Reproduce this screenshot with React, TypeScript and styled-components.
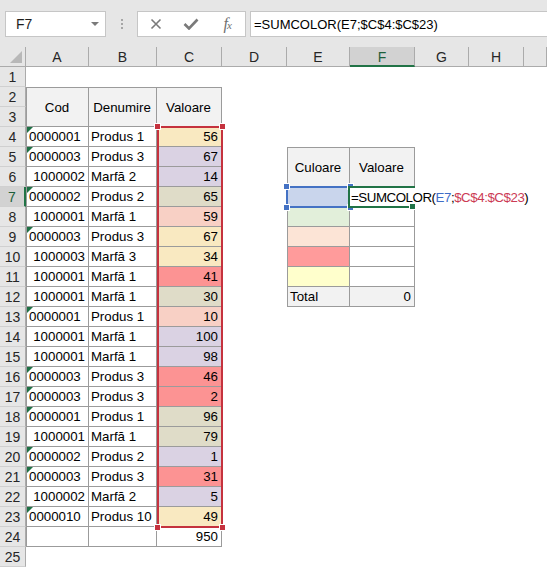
import React from "react";
import styled, { createGlobalStyle, css } from "styled-components";

const GlobalStyle = createGlobalStyle`
  html, body {
    margin: 0;
    padding: 0;
    background: #ffffff;
  }
  body {
    font-family: "Liberation Sans", Arial, sans-serif;
    font-size: 13px;
    color: #000;
    overflow: hidden;
  }
`;

const Window = styled.div`
  width: 547px;
  height: 567px;
  overflow: hidden;
  display: flex;
  flex-direction: column;
  background: #fff;
`;

/* ---------- formula bar ---------- */

const Toolbar = styled.div`
  height: 47px;
  flex: none;
  box-sizing: border-box;
  background: #e6e6e6;
  display: flex;
  align-items: flex-start;
  padding: 11px 0 0 5px;
`;

const NameBox = styled.div`
  width: 101px;
  height: 26px;
  box-sizing: border-box;
  background: #fff;
  border: 1px solid #c6c6c6;
  display: flex;
  align-items: center;
  justify-content: space-between;
  padding: 0 6px 0 10px;
  font-size: 14px;
  color: #1f1f1f;
`;

const DropArrow = styled.span`
  width: 0;
  height: 0;
  border-left: 4px solid transparent;
  border-right: 4px solid transparent;
  border-top: 4px solid #7a7a7a;
`;

const Grip = styled.div`
  width: 31px;
  height: 26px;
  display: flex;
  flex-direction: column;
  align-items: center;
  justify-content: center;
  gap: 2px;

  span {
    width: 2px;
    height: 2px;
    background: #a6a6a6;
  }
`;

const ButtonBox = styled.div`
  width: 109px;
  height: 26px;
  box-sizing: border-box;
  background: #fff;
  border: 1px solid #c6c6c6;
  display: grid;
  grid-template-columns: repeat(3, 1fr);
  align-items: center;
  justify-items: center;
`;

const Fx = styled.span`
  font-family: "Liberation Serif", "Times New Roman", serif;
  font-style: italic;
  font-size: 16px;
  color: #6f6f6f;
  letter-spacing: -1px;

  sub {
    font-size: 11px;
    vertical-align: 0;
  }
`;

const FormulaInput = styled.div`
  flex: 1;
  height: 26px;
  margin-left: 4px;
  box-sizing: border-box;
  background: #fff;
  border: 1px solid #c6c6c6;
  border-right: none;
  display: flex;
  align-items: center;
  padding-left: 3px;
  font-size: 13px;
  white-space: nowrap;
`;

/* ---------- sheet ---------- */

const Sheet = styled.div`
  display: grid;
  grid-template-columns: 26px 63px 68px 65px 65px 63px 65px 54px 55px 1fr;
  grid-template-rows: repeat(26, 20px);
  background: #fff;
`;

type Pos = { $c: number; $r: number; $span?: number };

const place = css<Pos>`
  grid-column: ${(p) => p.$c};
  grid-row: ${(p) => p.$r} / span ${(p) => p.$span ?? 1};
`;

const Corner = styled.div`
  grid-column: 1;
  grid-row: 1;
  position: relative;
  background: #e6e6e6;
  border-right: 1px solid #ababab;
  border-bottom: 1px solid #ababab;
  box-sizing: border-box;

  &::after {
    content: "";
    position: absolute;
    right: 3px;
    bottom: 3px;
    border-left: 12px solid transparent;
    border-bottom: 12px solid #b8b8b8;
  }
`;

const ColHead = styled.div<Pos & { $active?: boolean }>`
  ${place};
  box-sizing: border-box;
  display: flex;
  align-items: center;
  justify-content: center;
  font-size: 14px;
  background: ${(p) => (p.$active ? "#d2d2d2" : "#e6e6e6")};
  border-right: 1px solid #ababab;
  border-bottom: ${(p) => (p.$active ? "2px solid #217346" : "1px solid #ababab")};
  color: ${(p) => (p.$active ? "#1d5e3a" : "#262626")};
  padding-top: ${(p) => (p.$active ? "1px" : "0")};
`;

const RowHead = styled.div<Pos & { $active?: boolean }>`
  ${place};
  box-sizing: border-box;
  display: flex;
  align-items: center;
  justify-content: center;
  font-size: 14px;
  background: ${(p) => (p.$active ? "#d2d2d2" : "#e6e6e6")};
  border-bottom: 1px solid #d0d0d0;
  border-right: ${(p) => (p.$active ? "2px solid #217346" : "1px solid #ababab")};
  color: ${(p) => (p.$active ? "#1d5e3a" : "#262626")};
`;

type CellProps = Pos & {
  $align?: "left" | "right" | "center";
  $fill?: string;
  $left?: boolean;
  $top?: boolean;
  $flag?: boolean;
};

const Cell = styled.div<CellProps>`
  ${place};
  position: relative;
  box-sizing: border-box;
  display: flex;
  align-items: center;
  justify-content: ${(p) =>
    p.$align === "right" ? "flex-end" : p.$align === "center" ? "center" : "flex-start"};
  padding: 0 3px 0 2px;
  font-size: 13.3px;
  background: ${(p) => p.$fill ?? "#fff"};
  border-right: 1px solid #9b9b9b;
  border-bottom: 1px solid #9b9b9b;
  border-left: ${(p) => (p.$left ? "1px solid #9b9b9b" : "none")};
  border-top: ${(p) => (p.$top ? "1px solid #9b9b9b" : "none")};
  white-space: nowrap;

  ${(p) =>
    p.$flag &&
    css`
      &::before {
        content: "";
        position: absolute;
        left: 0;
        top: 0;
        border-top: 6px solid #1e7145;
        border-right: 6px solid transparent;
      }
    `}
`;

const RangeBox = styled.div<Pos & { $color: string }>`
  ${place};
  position: relative;
  margin: -1px -1px -1px 0;
  border: 2px solid ${(p) => p.$color};
  pointer-events: none;
  z-index: 2;
`;

const Handle = styled.span<{ $color: string; $x: "left" | "right"; $y: "top" | "bottom" }>`
  position: absolute;
  width: 5px;
  height: 5px;
  background: ${(p) => p.$color};
  border: 1px solid #fff;
  ${(p) => p.$x}: -5px;
  ${(p) => p.$y}: -5px;
`;

const EditCell = styled.div<Pos>`
  ${place};
  position: relative;
  z-index: 3;
  margin: -1px 0 -1px -2px;
  border-top: 2px solid #217346;
  border-bottom: 2px solid #217346;
  border-left: 2px solid #217346;
  background: #fff;
  display: flex;
  align-items: center;
  padding-left: 1px;
  font-size: 13.3px;
  white-space: nowrap;
  overflow: visible;
  letter-spacing: -0.45px;

  &::after {
    content: "";
    position: absolute;
    right: -1px;
    bottom: -4px;
    width: 5px;
    height: 5px;
    background: #217346;
    border: 1px solid #fff;
  }
`;

const EditText = styled.span`
  background: #fff;
`;

const Ref = styled.span<{ $color: string }>`
  color: ${(p) => p.$color};
`;

/* ---------- data ---------- */

const C = {
  gold: "#f9e9c1",
  lilac: "#dad2e3",
  tan: "#dfdcc8",
  rose: "#f8d0c5",
  red: "#fc9393",
};

type Row = { code: string; text: boolean; name: string; value: number; fill: string };

const rows: Row[] = [
  { code: "0000001", text: true, name: "Produs 1", value: 56, fill: C.gold },
  { code: "0000003", text: true, name: "Produs 3", value: 67, fill: C.lilac },
  { code: "1000002", text: false, name: "Marfă 2", value: 14, fill: C.lilac },
  { code: "0000002", text: true, name: "Produs 2", value: 65, fill: C.tan },
  { code: "1000001", text: false, name: "Marfă 1", value: 59, fill: C.rose },
  { code: "0000003", text: true, name: "Produs 3", value: 67, fill: C.gold },
  { code: "1000003", text: false, name: "Marfă 3", value: 34, fill: C.gold },
  { code: "1000001", text: false, name: "Marfă 1", value: 41, fill: C.red },
  { code: "1000001", text: false, name: "Marfă 1", value: 30, fill: C.tan },
  { code: "0000001", text: true, name: "Produs 1", value: 10, fill: C.rose },
  { code: "1000001", text: false, name: "Marfă 1", value: 100, fill: C.lilac },
  { code: "1000001", text: false, name: "Marfă 1", value: 98, fill: C.lilac },
  { code: "0000003", text: true, name: "Produs 3", value: 46, fill: C.red },
  { code: "0000003", text: true, name: "Produs 3", value: 2, fill: C.red },
  { code: "0000001", text: true, name: "Produs 1", value: 96, fill: C.tan },
  { code: "1000001", text: false, name: "Marfă 1", value: 79, fill: C.tan },
  { code: "0000002", text: true, name: "Produs 2", value: 1, fill: C.lilac },
  { code: "0000003", text: true, name: "Produs 3", value: 31, fill: C.red },
  { code: "1000002", text: false, name: "Marfă 2", value: 5, fill: C.lilac },
  { code: "0000010", text: true, name: "Produs 10", value: 49, fill: C.gold },
];

const swatches = ["#c9d5ec", "#e2efda", "#fce4d6", "#ff9b9b", "#ffffcc"];

const letters = ["A", "B", "C", "D", "E", "F", "G", "H", ""];

const HEAD = "#f2f2f2";
const BLUE = "#4472c4";
const RED = "#c5323e";

function Handles({ color }: { color: string }) {
  return (
    <>
      <Handle $color={color} $x="left" $y="top" />
      <Handle $color={color} $x="right" $y="top" />
      <Handle $color={color} $x="left" $y="bottom" />
      <Handle $color={color} $x="right" $y="bottom" />
    </>
  );
}

export default function App() {
  const formula = "=SUMCOLOR(E7;$C$4:$C$23)";
  return (
    <Window>
      <GlobalStyle />
      <Toolbar>
        <NameBox>
          F7
          <DropArrow />
        </NameBox>
        <Grip>
          <span />
          <span />
          <span />
        </Grip>
        <ButtonBox>
          <svg width="12" height="12" viewBox="0 0 12 12">
            <path d="M1.5 1.5 L10.5 10.5 M10.5 1.5 L1.5 10.5" stroke="#7a7a7a" strokeWidth="1.6" fill="none" />
          </svg>
          <svg width="16" height="12" viewBox="0 0 16 12">
            <path d="M1.5 6 L6 10.5 L14.5 1.5" stroke="#7a7a7a" strokeWidth="2.6" fill="none" />
          </svg>
          <Fx>
            f<sub>x</sub>
          </Fx>
        </ButtonBox>
        <FormulaInput>{formula}</FormulaInput>
      </Toolbar>

      <Sheet>
        <Corner />
        {letters.map((l, i) => (
          <ColHead key={i} $c={i + 2} $r={1} $active={l === "F"}>
            {l}
          </ColHead>
        ))}
        {Array.from({ length: 25 }, (_, i) => (
          <RowHead key={i} $c={1} $r={i + 2} $active={i + 1 === 7}>
            {i + 1}
          </RowHead>
        ))}

        {/* left table: A2:C24 */}
        <Cell $c={2} $r={3} $span={2} $fill={HEAD} $align="center" $left $top>
          Cod
        </Cell>
        <Cell $c={3} $r={3} $span={2} $fill={HEAD} $align="center" $top>
          Denumire
        </Cell>
        <Cell $c={4} $r={3} $span={2} $fill={HEAD} $align="center" $top>
          Valoare
        </Cell>
        {rows.map((r, i) => (
          <React.Fragment key={i}>
            <Cell $c={2} $r={i + 5} $left $flag={r.text} $align={r.text ? "left" : "right"}>
              {r.code}
            </Cell>
            <Cell $c={3} $r={i + 5}>{r.name}</Cell>
            <Cell $c={4} $r={i + 5} $fill={r.fill} $align="right">
              {r.value}
            </Cell>
          </React.Fragment>
        ))}
        <Cell $c={2} $r={25} $left />
        <Cell $c={3} $r={25} />
        <Cell $c={4} $r={25} $align="right">
          950
        </Cell>
        <RangeBox $c={4} $r={5} $span={20} $color={RED}>
          <Handles color={RED} />
        </RangeBox>

        {/* right table: E5:F12 */}
        <Cell $c={6} $r={6} $span={2} $fill={HEAD} $align="center" $left $top>
          Culoare
        </Cell>
        <Cell $c={7} $r={6} $span={2} $fill={HEAD} $align="center" $top>
          Valoare
        </Cell>
        {swatches.map((s, i) => (
          <React.Fragment key={i}>
            <Cell $c={6} $r={i + 8} $fill={s} $left />
            <Cell $c={7} $r={i + 8} />
          </React.Fragment>
        ))}
        <Cell $c={6} $r={13} $fill={HEAD} $left>
          Total
        </Cell>
        <Cell $c={7} $r={13} $fill={HEAD} $align="right">
          0
        </Cell>
        <RangeBox $c={6} $r={8} $color={BLUE} style={{ marginLeft: -1 }}>
          <Handles color={BLUE} />
        </RangeBox>
        <EditCell $c={7} $r={8}>
          <EditText>
            =SUMCOLOR(<Ref $color="#3f6dc7">E7</Ref>;<Ref $color="#cc3b55">$C$4:$C$23</Ref>)
          </EditText>
        </EditCell>
      </Sheet>
    </Window>
  );
}
